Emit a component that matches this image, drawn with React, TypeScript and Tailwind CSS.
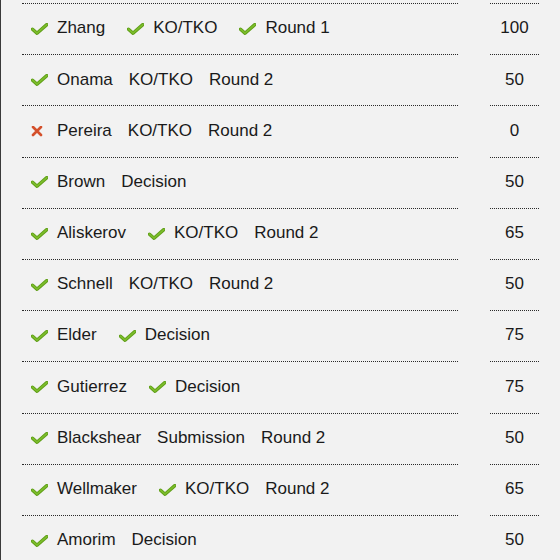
type Pick = { text: string; mark?: 'ok' | 'miss' };

type Row = { picks: Pick[]; points: number };

const rows: Row[] = [
  { picks: [{ text: 'Zhang', mark: 'ok' }, { text: 'KO/TKO', mark: 'ok' }, { text: 'Round 1', mark: 'ok' }], points: 100 },
  { picks: [{ text: 'Onama', mark: 'ok' }, { text: 'KO/TKO' }, { text: 'Round 2' }], points: 50 },
  { picks: [{ text: 'Pereira', mark: 'miss' }, { text: 'KO/TKO' }, { text: 'Round 2' }], points: 0 },
  { picks: [{ text: 'Brown', mark: 'ok' }, { text: 'Decision' }], points: 50 },
  { picks: [{ text: 'Aliskerov', mark: 'ok' }, { text: 'KO/TKO', mark: 'ok' }, { text: 'Round 2' }], points: 65 },
  { picks: [{ text: 'Schnell', mark: 'ok' }, { text: 'KO/TKO' }, { text: 'Round 2' }], points: 50 },
  { picks: [{ text: 'Elder', mark: 'ok' }, { text: 'Decision', mark: 'ok' }], points: 75 },
  { picks: [{ text: 'Gutierrez', mark: 'ok' }, { text: 'Decision', mark: 'ok' }], points: 75 },
  { picks: [{ text: 'Blackshear', mark: 'ok' }, { text: 'Submission' }, { text: 'Round 2' }], points: 50 },
  { picks: [{ text: 'Wellmaker', mark: 'ok' }, { text: 'KO/TKO', mark: 'ok' }, { text: 'Round 2' }], points: 65 },
  { picks: [{ text: 'Amorim', mark: 'ok' }, { text: 'Decision' }], points: 50 },
];

const Check = () => (
  <svg width="17" height="12" viewBox="0 0 17 12" className="ml-[6px] mr-[9px] inline-block">
    <path d="M1.5 6.2 L6 10.2 L15.8 1.6" fill="none" stroke="#5f9e17" strokeWidth="3.4" strokeLinecap="round" strokeLinejoin="round" />
    <path d="M1.5 6.2 L6 10.2 L15.8 1.6" fill="none" stroke="#7cbd2c" strokeWidth="1.6" strokeLinecap="round" strokeLinejoin="round" />
  </svg>
);

const Cross = () => (
  <svg width="17" height="11" viewBox="0 0 17 11" className="ml-[6px] mr-[9px] inline-block">
    <path d="M2 1 L10 9 M10 1 L2 9" fill="none" stroke="#d4502b" strokeWidth="2.6" strokeLinecap="round" />
  </svg>
);

export default function App() {
  return (
    <div
      className="h-[560px] overflow-hidden border-l border-[#3a3a3a] bg-[#f2f2f2] pl-[21px] pt-[3px] text-[17px] text-[#1a1a1a]"
      style={{ fontFamily: '"Liberation Sans", Arial, sans-serif' }}
    >
      {rows.map((row, i) => (
        <div key={i} className="flex gap-8">
          <div className="flex h-[51.2px] w-[436px] items-center border-t border-dotted border-[#2a2a2a] pb-[2px] pl-[3px]">
            <div className="flex gap-4 whitespace-nowrap">
              {row.picks.map((p, j) => (
                <span key={j}>
                  {p.mark === 'ok' && <Check />}
                  {p.mark === 'miss' && <Cross />}
                  {p.text}
                </span>
              ))}
            </div>
          </div>
          <div className="flex h-[51.2px] w-[49px] items-center justify-center border-t border-dotted border-[#2a2a2a] pb-[2px]">
            {row.points}
          </div>
        </div>
      ))}
    </div>
  );
}
